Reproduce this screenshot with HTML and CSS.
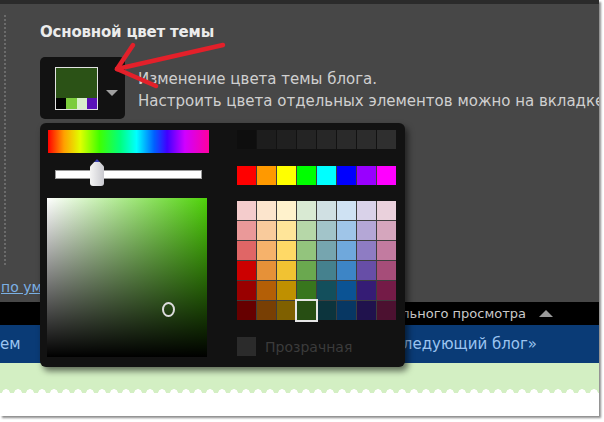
FILE: index.html
```html
<!DOCTYPE html>
<html lang="ru">
<head>
	<meta charset="UTF-8">
	<title>Основной цвет темы</title>
	<link rel="stylesheet" href="styles.css">
</head>
<body>

<div class="frame">
	<div class="topbar"></div>

	<div class="panel">
		<div class="panel-main">
			<div class="rail"></div>
			<div class="content">
				<h2 class="title">Основной цвет темы</h2>
				<div class="picker-row">
					<div class="swatch-btn">
						<div class="swatch">
							<div class="swatch-main"></div>
							<div class="swatch-strip">
								<span class="c-black"></span>
								<span class="c-green"></span>
								<span class="c-pale"></span>
								<span class="c-violet"></span>
							</div>
						</div>
						<span class="caret"></span>
					</div>
					<p class="desc">Изменение цвета темы блога.<br>Настроить цвета отдельных элементов можно на вкладке</p>
				</div>
			</div>
		</div>
		<a class="reset" href="#">по умолчанию</a>
	</div>

	<div class="previewbar">
		<span>Скрыть окно предварительного просмотра</span>
		<span class="up"></span>
	</div>
	<div class="navbar">
		<span class="nav-left">ем</span>
		<span class="nav-right">Следующий блог»</span>
	</div>
	<div class="lawn"></div>
	<div class="paper"></div>

	<!-- color picker popup, drawn over the page -->
	<div class="popover">
		<div class="pick-col">
			<div class="hue"></div>
			<div class="slider"><span class="thumb"></span></div>
			<div class="sv"><span class="marker"></span></div>
		</div>
		<div class="swatch-col">
			<div class="cells grays">
				<span style="background:#0e0e0e"></span>
				<span style="background:#1d1d1d"></span>
				<span style="background:#202020"></span>
				<span style="background:#242424"></span>
				<span style="background:#272727"></span>
				<span style="background:#2a2a2a"></span>
				<span style="background:#2c2c2c"></span>
				<span style="background:#2f2f2f"></span>
			</div>
			<div class="cells brights" id="brights"></div>
			<div class="cells palette" id="palette"></div>
			<label class="transparent">
				<span class="box"></span>
				<span>Прозрачная</span>
			</label>
		</div>
	</div>

	<svg class="arrow" width="240" height="100" viewBox="0 0 240 100">
		<g stroke="#e3202a" stroke-width="4.5" stroke-linecap="round" fill="none">
			<path d="M223 45 L117 69"/>
			<path d="M117 69 L133 45"/>
			<path d="M117 69 L156 86"/>
		</g>
	</svg>
</div>

<script>
	const brights = ['#ff0000', '#ff9900', '#ffff00', '#00ff00', '#00ffff', '#0000ff', '#9900ff', '#ff00ff'];
	const palette = [
		['#f4cccc', '#fce5cd', '#fff2cc', '#d9ead3', '#d0e0e3', '#cfe2f3', '#d9d2e9', '#ead1dc'],
		['#ea9999', '#f9cb9c', '#ffe599', '#b6d7a8', '#a2c4c9', '#9fc5e8', '#b4a7d6', '#d5a6bd'],
		['#e06666', '#f6b26b', '#ffd966', '#93c47d', '#76a5af', '#6fa8dc', '#8e7cc3', '#c27ba0'],
		['#cc0000', '#e69138', '#f1c232', '#6aa84f', '#45818e', '#3d85c6', '#674ea7', '#a64d79'],
		['#990000', '#b45f06', '#bf9000', '#38761d', '#134f5c', '#0b5394', '#351c75', '#741b47'],
		['#660000', '#783f04', '#7f6000', '#274e13', '#0c343d', '#073763', '#20124d', '#4c1130']
	];
	const selected = '#274e13';

	function fill(id, colors) {
		const box = document.getElementById(id);
		colors.forEach(function (c) {
			const cell = document.createElement('span');
			cell.style.background = c;
			if (c === selected) cell.className = 'selected';
			box.appendChild(cell);
		});
	}

	fill('brights', brights);
	fill('palette', palette.flat());
</script>
</body>
</html>
```

FILE: styles.css
```css
html, body {
	margin: 0;
	background: #fff;
}
body {
	width: 604px;
	height: 422px;
	overflow: hidden;
	font-family: "DejaVu Sans", Verdana, sans-serif;
}

.frame {
	position: relative;
	width: 599px;
	height: 416px;
	overflow: hidden;
	box-shadow: 2px 2px 2px rgba(0, 0, 0, .45);
}

.topbar {
	height: 4px;
	background: #2b2b2b;
}

.panel {
	height: 298px;
	background: #474747;
	display: flex;
	flex-direction: column;
}
.panel-main {
	flex: 1;
	display: flex;
}
.rail {
	margin: 11px 0 0 4px;
	height: 250px;
	border-left: 2px dotted #6b6b6b;
}
.content {
	padding: 18px 0 0 34px;
}
.title {
	margin: 0;
	font-size: 15px;
	line-height: 20px;
	font-weight: bold;
	color: #ececec;
	white-space: nowrap;
	letter-spacing: -0.2px;
}

.picker-row {
	display: flex;
	margin-top: 15px;
}
.swatch-btn {
	width: 85px;
	height: 62px;
	box-sizing: border-box;
	padding: 10px 0 0 15px;
	display: flex;
	flex-shrink: 0;
	background: #121212;
	border-radius: 5px;
}
.swatch {
	width: 41px;
	height: 41px;
	border: 1px solid #e2e2e2;
	display: flex;
	flex-direction: column;
}
.swatch-main {
	flex: 1;
	background: #2b5216;
}
.swatch-strip {
	height: 11px;
	display: flex;
}
.swatch-strip span {
	flex: 1;
}
.c-black { background: #000; }
.c-green { background: #7ccc3c; }
.c-pale { background: #d8f0cc; }
.c-violet { background: #5a12b8; }

.caret {
	margin: 23px 0 0 8px;
	width: 0;
	height: 0;
	border-left: 6px solid transparent;
	border-right: 6px solid transparent;
	border-top: 6px solid #a0a0a0;
}

.desc {
	margin: 11px 0 0 13px;
	font-size: 15px;
	line-height: 22px;
	color: #d0d0d0;
	white-space: nowrap;
}

.reset {
	margin: 0 0 6px 1px;
	font-size: 14px;
	line-height: 18px;
	color: #7bb0e4;
	white-space: nowrap;
}

.previewbar {
	height: 23px;
	background: #000;
	display: flex;
	justify-content: flex-end;
	align-items: center;
	padding-right: 46px;
	font-size: 13px;
	color: #c9c9c9;
	white-space: nowrap;
}
.up {
	margin-left: 13px;
	width: 0;
	height: 0;
	border-left: 7px solid transparent;
	border-right: 7px solid transparent;
	border-bottom: 7px solid #9a9a9a;
}

.navbar {
	height: 38px;
	background: #0a3b76;
	display: flex;
	justify-content: space-between;
	align-items: center;
	padding-right: 62px;
	font-size: 15px;
	color: #9cc4f0;
	white-space: nowrap;
}

.lawn {
	height: 30px;
	background:
		radial-gradient(circle at 6px 100%, #fff 3.5px, transparent 4px) 0 100% / 12px 5px repeat-x,
		#d3efc3;
}
.paper {
	height: 23px;
	background: #fff;
}

/* popup */
.popover {
	position: absolute;
	left: 40px;
	top: 123px;
	width: 365px;
	height: 244px;
	box-sizing: border-box;
	padding: 7px 0 0 7px;
	display: flex;
	background: #121212;
	border-radius: 6px;
	box-shadow: 3px 4px 6px rgba(0, 0, 0, .55);
}
.pick-col {
	width: 162px;
}
.hue {
	margin-left: 1px;
	width: 161px;
	height: 23px;
	background: linear-gradient(to right, #ff0000, #ffa000 10%, #e0ff00 20%, #40ff00 32%, #00ff80 45%, #00ffff 55%, #0060ff 66%, #4000ff 74%, #d000ff 85%, #ff00a0 100%);
}
.slider {
	position: relative;
	margin: 17px 0 0 8px;
	width: 147px;
	height: 9px;
	box-sizing: border-box;
	background: #fff;
	border: 1px solid #9a9a9a;
}
.thumb {
	position: absolute;
	left: 34px;
	top: -12px;
	width: 14px;
	height: 27px;
	box-sizing: border-box;
	background: linear-gradient(to right, #f4f4f4, #c9c9cf);
	border-top: 3px solid #3a40b0;
	clip-path: polygon(50% 0, 100% 28%, 100% 100%, 0 100%, 0 28%);
	border-radius: 0 0 3px 3px;
}
.sv {
	position: relative;
	margin-top: 19px;
	width: 160px;
	height: 159px;
	background:
		linear-gradient(to top, #000, rgba(0, 0, 0, 0)),
		linear-gradient(to right, #fff, #4fd20a);
}
.marker {
	position: absolute;
	left: 115px;
	top: 104px;
	width: 9px;
	height: 11px;
	border: 2px solid #dcdcdc;
	border-radius: 50%;
}

.swatch-col {
	margin-left: 28px;
}
.cells {
	display: grid;
	grid-template-columns: repeat(8, 19px);
	grid-auto-rows: 19px;
	gap: 1px;
	width: 159px;
}
.cells span {
	display: block;
}
.brights, .palette {
	background: #3e3e3e;
}
.brights {
	margin-top: 17px;
}
.palette {
	margin-top: 16px;
}
.palette .selected {
	outline: 2px solid #e6e6e6;
	position: relative;
}

.transparent {
	display: flex;
	align-items: center;
	margin-top: 17px;
	font-size: 14px;
	color: #3b3b3b;
}
.box {
	width: 19px;
	height: 19px;
	margin-right: 9px;
	background: #2b2b2b;
}

.arrow {
	position: absolute;
	left: 0;
	top: 0;
}
```
